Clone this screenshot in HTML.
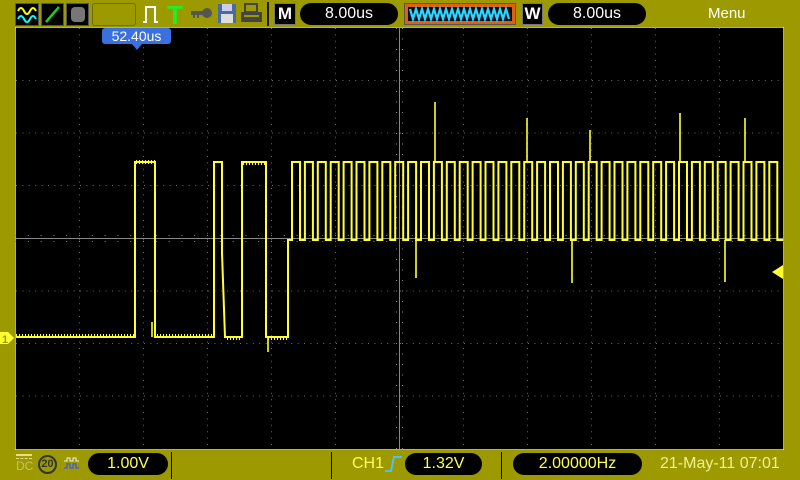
<!DOCTYPE html>
<html><head><style>
body{margin:0;width:800px;height:480px;background:#9c9a00;position:relative;overflow:hidden;font-family:"Liberation Sans",sans-serif}
.a{position:absolute}
.pill{position:absolute;background:#000;border-radius:12px;color:#fff;text-align:center;font-size:16px;line-height:22px;height:22px}
.by{color:#ffff50}
.sep{position:absolute;width:2px;background:#1a1a00}
</style></head><body>
<div class="a" style="left:15px;top:3px;width:22px;height:21px;background:#000;border:1px solid #555">
<svg width="22" height="21"><path d="M2,7 q3,-6 6,0 t6,0 t6,0" stroke="#ff0" fill="none" stroke-width="2"/><path d="M2,15 q3,-6 6,0 t6,0 t6,0" stroke="#0ff" fill="none" stroke-width="2"/></svg></div>
<div class="a" style="left:41px;top:3px;width:21px;height:21px;background:#000;border:1px solid #555"><svg width="21" height="21"><path d="M4,18 L17,3" stroke="#2c2" stroke-width="2.5"/></svg></div>
<div class="a" style="left:66px;top:3px;width:21px;height:21px;background:#000;border:1px solid #555"><div class="a" style="left:4px;top:3px;width:14px;height:15px;background:#777;border-radius:4px"></div></div>
<div class="a" style="left:92px;top:3px;width:42px;height:21px;border:1px solid #6f6d00;border-radius:3px"></div>
<svg class="a" style="left:142px;top:4px" width="18" height="20"><path d="M1,18 h3 V3 h9 V18 h3" stroke="#fff" fill="none" stroke-width="2"/></svg>
<div class="a" style="left:167px;top:0px;color:#2e2;font-size:26px;font-weight:bold">T</div>
<svg class="a" style="left:190px;top:6px" width="24" height="14"><circle cx="17" cy="7" r="5" fill="#555"/><rect x="1" y="5" width="14" height="4" fill="#555"/><rect x="3" y="8" width="2" height="4" fill="#555"/><rect x="7" y="8" width="2" height="4" fill="#555"/></svg>
<svg class="a" style="left:217px;top:3px" width="20" height="21"><rect x="1" y="1" width="18" height="19" fill="#4a6aa0"/><rect x="5" y="1" width="10" height="7" fill="#cce"/><rect x="4" y="11" width="12" height="9" fill="#ddd"/></svg>
<svg class="a" style="left:240px;top:3px" width="23" height="21"><rect x="5" y="1" width="12" height="8" fill="none" stroke="#444" stroke-width="2"/><rect x="1" y="9" width="21" height="10" fill="#444"/><rect x="4" y="12" width="15" height="2" fill="#9c9a00"/></svg>
<div class="sep" style="left:267px;top:2px;height:24px"></div>
<div class="a" style="left:274px;top:3px;width:20px;height:20px;background:#000;border:1px solid #777;color:#fff;font-weight:bold;font-size:17px;text-align:center;line-height:20px">M</div>
<div class="pill" style="left:300px;top:3px;width:98px">8.00us</div>
<div class="a" style="left:404px;top:3px;width:108px;height:18px;background:#e06010;border:1px solid #555;padding:1px">
<svg width="108" height="18"><rect x="2" y="2" width="104" height="14" fill="#001020"/><path d="M4,4 L7,14 L10,4 L13,14 L16,4 L19,14 L22,4 L25,14 L28,4 L31,14 L34,4 L37,14 L40,4 L43,14 L46,4 L49,14 L52,4 L55,14 L58,4 L61,14 L64,4 L67,14 L70,4 L73,14 L76,4 L79,14 L82,4 L85,14 L88,4 L91,14 L94,4 L97,14 L100,4 L103,14" stroke="#2ad8ff" fill="none" stroke-width="2.2"/></svg></div>
<div class="a" style="left:522px;top:3px;width:19px;height:20px;background:#000;border:1px solid #777;color:#fff;font-weight:bold;font-size:17px;text-align:center;line-height:20px">W</div>
<div class="pill" style="left:548px;top:3px;width:98px">8.00us</div>
<div class="a" style="left:708px;top:5px;color:#fff;font-size:15px">Menu</div>
<svg class="a" style="left:15px;top:27px" width="769" height="423">
<rect x="0" y="0" width="769" height="423" fill="#000" stroke="#e8e8b0" stroke-width="1.5"/>
<g stroke="#6a6a6a" stroke-width="1" stroke-dasharray="1,5.4">
<path d="M64.5,1V422M128.5,1V422M192.5,1V422M256.5,1V422M320.5,1V422M448.5,1V422M512.5,1V422M576.5,1V422M640.5,1V422M704.5,1V422"/>
<path d="M1,53.5H768M1,106H768M1,158.5H768M1,264H768M1,316.5H768M1,369H768"/>
</g>
<path d="M384.5,1V422M1,211.5H768" stroke="#888" stroke-width="1"/>
<g stroke="#888" stroke-dasharray="1,11.8"><path d="M0,208.5H769M0,214.5H769"/><path d="M381.5,1V422M387.5,1V422" stroke-dasharray="1,9.5"/></g>
</svg>
<svg class="a" style="left:0;top:0" width="800" height="480">
<g stroke="#ffff30" fill="none" stroke-width="2">
<path d="M16,337 H135 V162 H155 V337 H214 V162 H222 V253 L225,337 H242 V162 H266 V337 H288 V240 H292
V162 h8 V240 h4.9 V162 h8 V240 h4.9 V162 h8 V240 h4.9 V162 h8 V240 h4.9 V162 h8 V240 h4.9 V162 h8 V240 h4.9 V162 h8 V240 h4.9 V162 h8 V240 h4.9 V162 h8 V240 h4.9 V162 h8 V240 h4.9
V162 h8 V240 h4.9 V162 h8 V240 h4.9 V162 h8 V240 h4.9 V162 h8 V240 h4.9 V162 h8 V240 h4.9 V162 h8 V240 h4.9 V162 h8 V240 h4.9 V162 h8 V240 h4.9 V162 h8 V240 h4.9 V162 h8 V240 h4.9
V162 h8 V240 h4.9 V162 h8 V240 h4.9 V162 h8 V240 h4.9 V162 h8 V240 h4.9 V162 h8 V240 h4.9 V162 h8 V240 h4.9 V162 h8 V240 h4.9 V162 h8 V240 h4.9 V162 h8 V240 h4.9 V162 h8 V240 h4.9
V162 h8 V240 h4.9 V162 h8 V240 h4.9 V162 h8 V240 h4.9 V162 h8 V240 h4.9 V162 h8 V240 h4.9 V162 h8 V240 h4.9 V162 h8 V240 h4.9 V162 h8 V240 h4.9 H783"/>
<path d="M435,162V102M527,162V118M590,162V130M680,162V113M745,162V118M416,240V278M572,240V283M725,240V282M268,337V352M152,337V322" stroke-width="1.6"/>
</g>
<g stroke="#ffff30" stroke-width="4" fill="none" stroke-dasharray="1,2"><path d="M16,336H134M157,336H214M227,338H242M268,338H288M136,162H155M243,163H266"/></g>
<path d="M0,332 h8 l6,6 l-6,6 h-8z" fill="#ffff30"/><text x="2" y="343" font-size="11" font-family="Liberation Sans" font-weight="bold" fill="#9c9a00">1</text>
<path d="M783,265 v14 l-11,-7z" fill="#ffff30"/>
</svg>
<div class="a" style="left:102px;top:28px;width:69px;height:16px;background:#3a70e0;border-radius:3px;color:#fff;font-size:14px;text-align:center;line-height:16px">52.40us</div>
<div class="a" style="left:132px;top:44px;width:0;height:0;border-left:5px solid transparent;border-right:5px solid transparent;border-top:6px solid #3a70e0"></div>
<div class="a" style="left:16px;top:454px;width:16px;height:2px;border-top:2px solid #e8e080;border-bottom:1px dashed #e8e080"></div>
<div class="a" style="left:16px;top:459px;color:#c8c070;font-size:12px">DC</div>
<div class="a" style="left:38px;top:455px;width:15px;height:15px;border:2px solid #333;border-radius:50%;color:#333;font-size:11px;font-weight:bold;text-align:center;line-height:15px">20</div>
<svg class="a" style="left:63px;top:456px" width="20" height="14"><path d="M1,5 h3 v-3 h3 v3 h3 v-3 h3 v3 h3" stroke="#eee" fill="none"/><path d="M1,12 h3 v-4 h3 v4 h3 v-4 h3 v4 h3" stroke="#5060c0" fill="none" stroke-width="1.5"/></svg>
<div class="pill by" style="left:88px;top:453px;width:80px">1.00V</div>
<div class="sep" style="left:171px;top:452px;height:27px;width:1px;background:#000"></div>
<div class="sep" style="left:331px;top:452px;height:27px;width:1px;background:#000"></div>
<div class="a by" style="left:352px;top:455px;font-size:16px">CH1</div>
<svg class="a" style="left:384px;top:454px" width="20" height="20"><path d="M1,17 h6 L10,3 h8" stroke="#4ac0ff" fill="none" stroke-width="2"/></svg>
<div class="pill by" style="left:405px;top:453px;width:77px">1.32V</div>
<div class="sep" style="left:501px;top:452px;height:27px;width:1px;background:#000"></div>
<div class="pill by" style="left:513px;top:453px;width:129px">2.00000Hz</div>
<div class="a" style="left:660px;top:455px;font-size:16px;color:#f0f090">21-May-11 07:01</div>
</body></html>
